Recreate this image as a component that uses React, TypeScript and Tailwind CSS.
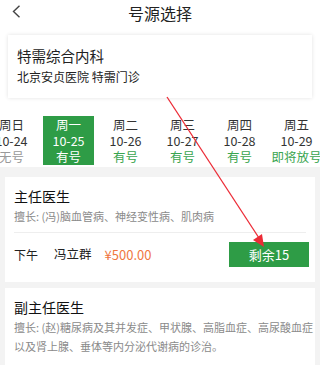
import React from 'react';

const days = [
  { w: '周日', d: '10-24', s: '无号', state: 'none' },
  { w: '周一', d: '10-25', s: '有号', state: 'active' },
  { w: '周二', d: '10-26', s: '有号', state: 'ok' },
  { w: '周三', d: '10-27', s: '有号', state: 'ok' },
  { w: '周四', d: '10-28', s: '有号', state: 'ok' },
  { w: '周五', d: '10-29', s: '即将放号', state: 'ok' },
];

function DayCell({ w, d, s, state }: { w: string; d: string; s: string; state: string }) {
  const active = state === 'active';
  return (
    <div className="w-[57px] shrink-0 flex justify-center">
      <div
        className={
          'w-[51px] h-[49px] flex flex-col items-center justify-center text-[12.5px] leading-[16px] whitespace-nowrap ' +
          (active ? 'bg-[#2e9c46] text-white' : 'text-[#333]')
        }
      >
        <div>{w}</div>
        <div>{d}</div>
        <div className={active ? 'text-white' : state === 'none' ? 'text-[#999]' : 'text-[#3aa54f]'}>{s}</div>
      </div>
    </div>
  );
}

export default function App() {
  return (
    <div
      className="relative w-[320px] h-[365px] overflow-hidden bg-white"
      style={{ fontFamily: '"Noto Sans CJK SC", "Noto Sans", sans-serif' }}
    >
      {/* Header */}
      <div className="relative h-[26px] flex items-center justify-center">
        <svg className="absolute left-[12px] top-[5px]" width="9" height="13" viewBox="0 0 9 13">
          <path d="M7.5 0.8 L1.5 6.5 L7.5 12.2" fill="none" stroke="#444" strokeWidth="1.4" />
        </svg>
        <span className="text-[16px] text-[#222]">号源选择</span>
      </div>

      {/* Department card */}
      <div className="px-[8px] pt-[9px]">
        <div className="h-[63px] bg-white shadow-[0_0_4px_rgba(0,0,0,0.12)] px-[9px] pt-[11px]">
          <div className="text-[14.5px] leading-[20px] text-[#222]">特需综合内科</div>
          <div className="mt-[3px] text-[12px] leading-[16px] text-[#222]">北京安贞医院 特需门诊</div>
        </div>
      </div>

      {/* Date row */}
      <div className="mt-[18px] flex -ml-[17px]">
        {days.map((x) => (
          <DayCell key={x.w} {...x} />
        ))}
      </div>

      {/* Doctor list */}
      <div className="mt-[2px] bg-[#f3f3f3] px-[5px] pt-[10px] pb-[10px] flex flex-col gap-[6px]">
        <div className="bg-white px-[9px] pt-[9px] h-[105px]">
          <div className="text-[14px] leading-[20px] text-[#111]">主任医生</div>
          <div className="mt-[1px] text-[11px] leading-[19px] text-[#8a8a8a]">擅长: (冯)脑血管病、神经变性病、肌肉病</div>
          <div className="mt-[6px] border-t border-[#eeeeee]" />
          <div className="mt-[9px] flex items-center">
            <span className="text-[12px] text-[#222]">下午</span>
            <span className="ml-[16px] text-[12.5px] text-[#222]">冯立群</span>
            <span className="ml-[13px] text-[13px] text-[#f0773f]">¥500.00</span>
            <div className="ml-auto mr-[-3px] w-[80px] h-[25px] bg-[#2e9c46] text-white text-[13px] flex items-center justify-center">
              剩余15
            </div>
          </div>
        </div>
        <div className="bg-white px-[9px] pt-[9px] h-[90px]">
          <div className="text-[14px] leading-[20px] text-[#111]">副主任医生</div>
          <div className="mt-[1px] text-[11px] leading-[19px] text-[#8a8a8a] whitespace-nowrap">
            <div>擅长: (赵)糖尿病及其并发症、甲状腺、高脂血症、高尿酸血症</div>
            <div>以及肾上腺、垂体等内分泌代谢病的诊治。</div>
          </div>
        </div>
      </div>

      {/* Annotation arrow */}
      <svg className="absolute inset-0 pointer-events-none" width="320" height="365" viewBox="0 0 320 365">
        <line x1="167" y1="97" x2="259" y2="238" stroke="#ec2b36" strokeWidth="1.3" />
        <polygon points="264,247 253,240 262,234" fill="#ec2b36" />
      </svg>
    </div>
  );
}
